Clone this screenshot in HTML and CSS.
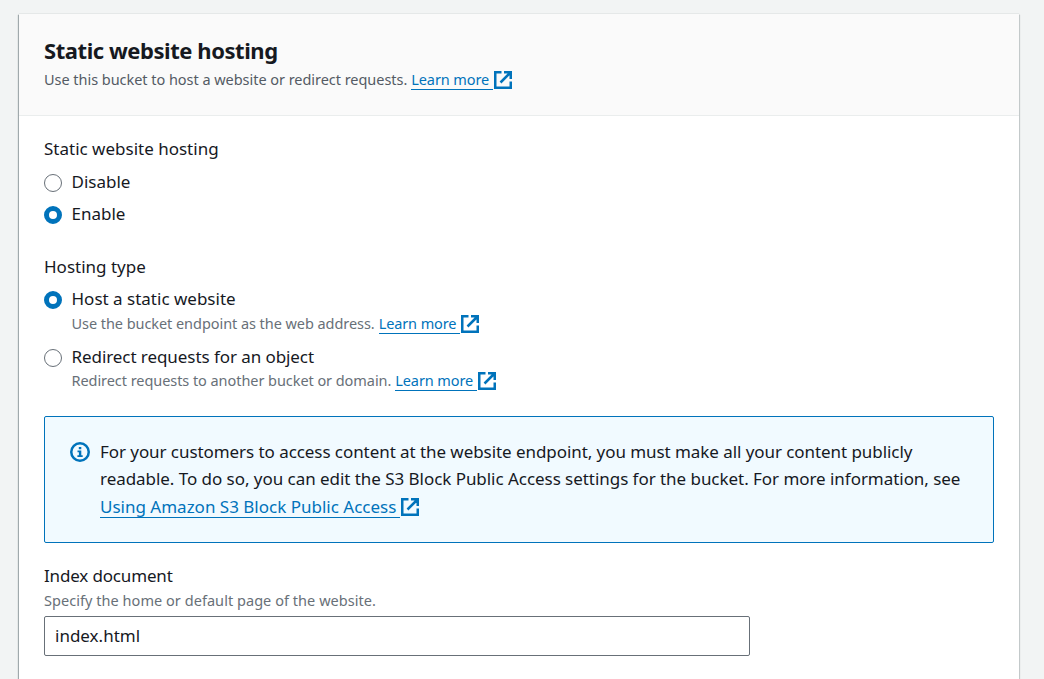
FILE: index.html
```html
<!DOCTYPE html>
<html lang="en">
<head>
<meta charset="utf-8">
<title>Static website hosting</title>
<link rel="stylesheet" href="styles.css">
</head>
<body>
<svg class="defs" aria-hidden="true">
  <symbol id="external" viewBox="0 0 18 18"><path d="M7.5 1.25H1.25v15.5h15.5V10.5M10 1.25h6.75V8M16.5 1.5L6.5 11.5" fill="none" stroke="currentColor" stroke-width="2.5"/></symbol>
</svg>
<main class="panel">
  <header class="panel-header">
    <h1 class="title"><span class="t-title">Static website hosting</span></h1>
    <p class="small header-desc"><span class="t-desc">Use this bucket to host a website or redirect requests.</span><a class="link"><span class="link-text">Learn more</span><svg class="ext"><use href="#external"/></svg></a></p>
  </header>
  <div class="panel-body">
    <section class="group">
      <h2 class="label"><span class="t-hosting">Static website hosting</span></h2>
      <div class="option option-first"><span class="radio"></span><span class="t-disable">Disable</span></div>
      <div class="option"><span class="radio checked"></span><span class="t-enable">Enable</span></div>
    </section>
    <section class="group group-type">
      <h2 class="label"><span class="t-type">Hosting type</span></h2>
      <div class="option"><span class="radio checked"></span><span class="t-host">Host a static website</span></div>
      <p class="small hint"><span class="t-use">Use the bucket endpoint as the web address.</span><a class="link"><span class="link-text">Learn more</span><svg class="ext"><use href="#external"/></svg></a></p>
      <div class="option option-redirect"><span class="radio"></span><span class="t-redirect">Redirect requests for an object</span></div>
      <p class="small hint hint-redirect"><span class="t-another">Redirect requests to another bucket or domain.</span><a class="link"><span class="link-text">Learn more</span><svg class="ext"><use href="#external"/></svg></a></p>
    </section>
    <aside class="alert">
      <svg class="info" viewBox="0 0 20 20"><circle cx="10" cy="10" r="8.75" fill="none" stroke="currentColor" stroke-width="2.5"/><path d="M8.8 5h2.5v2.3H8.8zM7.5 8.5h3.8v4.8h1.4V15H7.4v-1.7h1.5v-3H7.5z" fill="currentColor"/></svg>
      <div class="alert-text">
        <div class="line-one"><span class="t-a1">For your customers to access content at the website endpoint, you must make all your content publicly</span></div>
        <div class="line-two"><span class="t-a2">readable. To do so, you can edit the S3 Block Public Access settings for the bucket. For more information, see</span></div>
        <a class="link alert-link"><span class="link-text">Using Amazon S3 Block Public Access</span><svg class="ext"><use href="#external"/></svg></a>
      </div>
    </aside>
    <section class="field">
      <h2 class="label"><span class="t-index">Index document</span></h2>
      <p class="small field-desc"><span class="t-specify">Specify the home or default page of the website.</span></p>
      <div class="input"><span class="t-input">index.html</span></div>
    </section>
  </div>
</main>
</body>
</html>
```
FILE: styles.css
```css
* { box-sizing: border-box; }
body { margin: 0; height: 679px; background: #f2f4f4; color: #16191f; font: 17px/28px "Noto Sans", sans-serif; padding: 14px 25px 0 19px; white-space: nowrap; }
h1, h2, p { margin: 0; font-weight: 400; font-size: inherit; }
.defs { display: none; }
.panel { height: 665px; background: #fff; box-shadow: 0 0 1px rgba(0, 28, 36, .3), 1px 1px 1px rgba(0, 28, 36, .15), -1px 1px 1px rgba(0, 28, 36, .3); clip-path: inset(-2px -2px 0 -2px); }
.panel-header { height: 102px; background: #fafafa; border-bottom: 1px solid #eaeded; padding: 22px 25px 0; }
.title { font-size: 22px; font-weight: 700; line-height: 28px; letter-spacing: -.44px; }
.small { display: flex; font-size: 14.5px; line-height: 24px; color: #687078; }
.header-desc { color: #545b64; margin-top: 3px; }
.link { display: inline-flex; color: #0073bb; margin-left: 4px; }
.link-text { height: 22px; padding-right: 4px; border-bottom: 1px solid currentColor; }
.small .link-text { letter-spacing: -.11px; }
.ext { width: 18px; height: 18px; margin: 3px 0 0 1px; }
.small .ext { margin-top: 4px; }
.small .link-text { height: 23px; line-height: 24px; }
.t-desc { letter-spacing: -.04px; }
.t-use, .t-another { letter-spacing: -.06px; }
.t-redirect { letter-spacing: -.07px; }
.t-a1 { letter-spacing: -.065px; }
.t-a2 { letter-spacing: -.045px; }
.t-index { letter-spacing: -.16px; }
.t-specify { letter-spacing: .045px; }
.panel-body { padding: 19px 25px 0; }
.label { height: 28px; }
.option { display: flex; align-items: center; height: 28px; gap: 9.5px; margin-top: 4px; }
.option-first { margin-top: 5px; }
.radio { width: 18px; height: 18px; border: 1px solid #687078; border-radius: 50%; background: #fff; position: relative; top: 1px; }
.checked { border: 5.5px solid #0073bb; }
.group-type { margin-top: 25px; }
.hint { padding-left: 27.5px; margin-top: -2px; }
.option-redirect { margin-top: 8px; }
.hint-redirect { margin-top: -3px; }
.alert { display: flex; height: 127px; margin-top: 24px; padding: 21px 25px; border: 1px solid #0073bb; border-radius: 2px; background: #f1faff; }
.info { width: 20px; height: 20px; color: #0073bb; margin: 4px 10px 0 0; }
.alert-text { line-height: 27px; }
.line-two { line-height: 28px; }
.alert-link { margin-left: 0; line-height: 28px; }
.alert-link .link-text { height: 25px; }
.alert-link .ext { margin-top: 5px; }
.field { margin-top: 19px; }
.field-desc { margin-top: -2px; }
.input { width: 706px; height: 40px; margin-top: 4px; border: 1px solid #687078; border-radius: 2px; padding: 5px 10px; }
```
